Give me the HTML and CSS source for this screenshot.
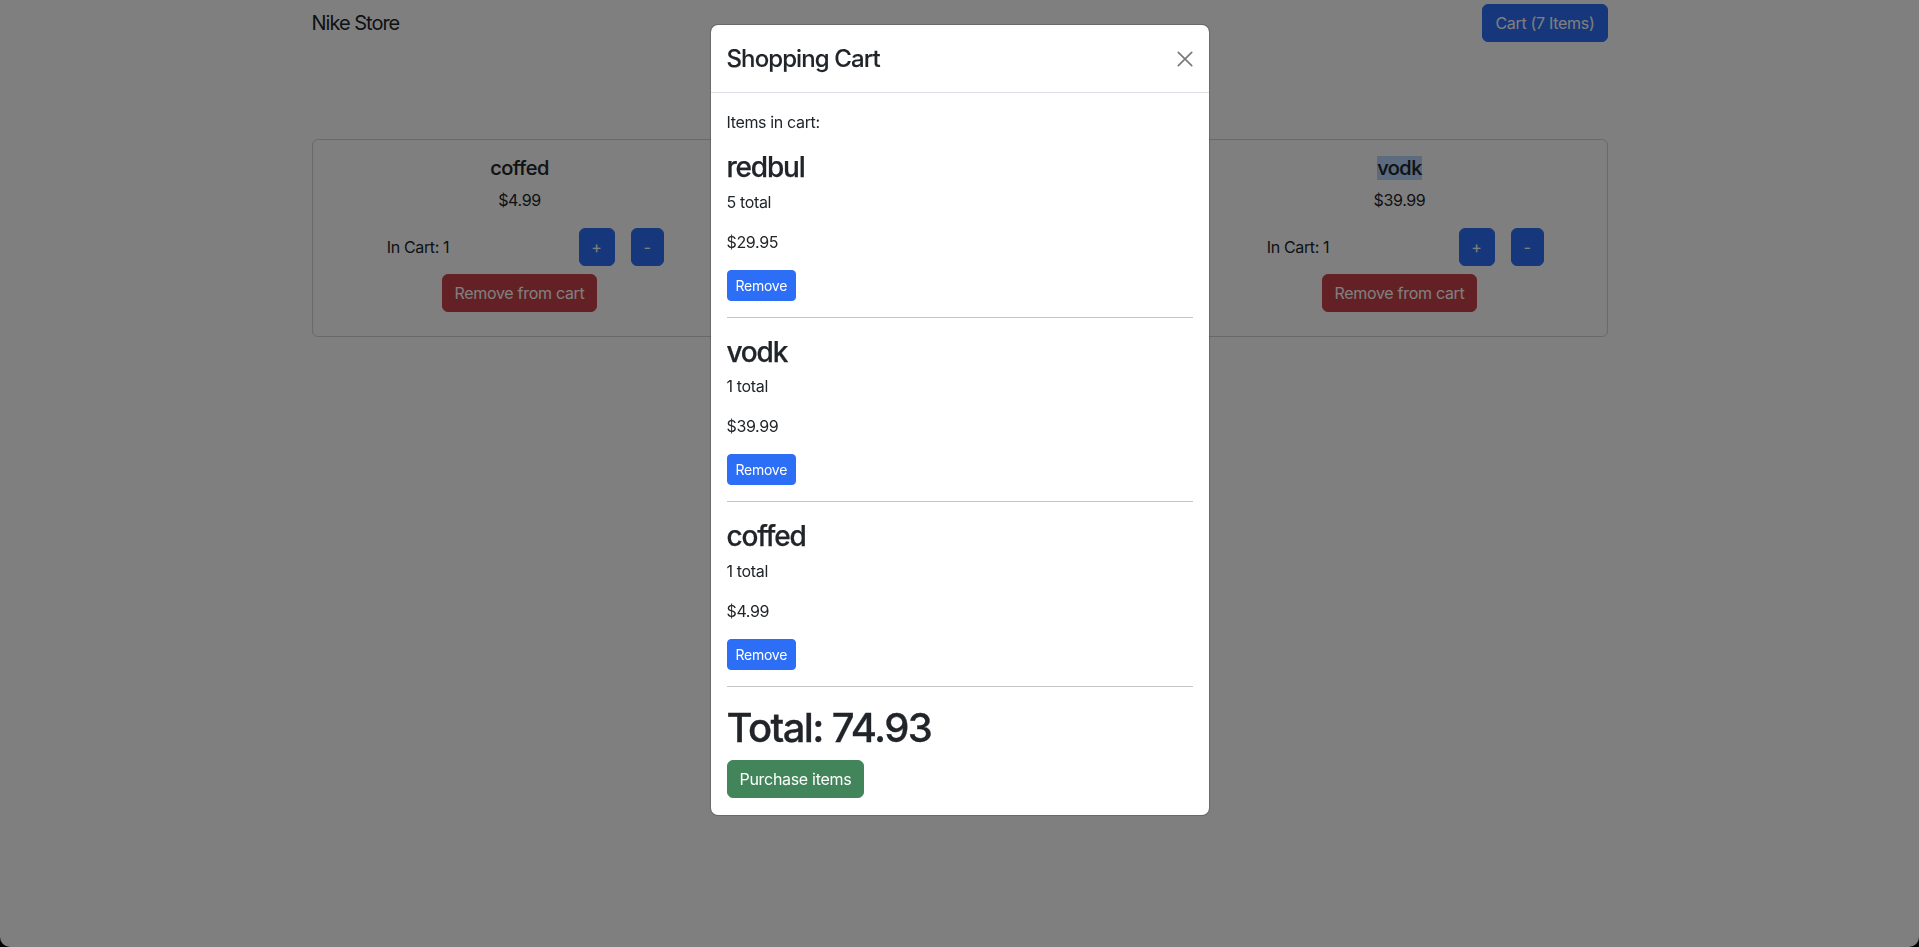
FILE: index.html
```html
<!DOCTYPE html>
<html lang="en">
<head>
<meta charset="utf-8">
<title>Nike Store</title>
<link rel="stylesheet" href="styles.css">
</head>
<body>
<div class="container">
  <header class="topbar">
    <span class="brand">Nike Store</span>
    <button class="btn btn-primary">Cart (7 Items)</button>
  </header>

  <main class="products">
    <div class="card">
      <h5 class="card-title">coffed</h5>
      <p class="price">$4.99</p>
      <div class="qty-row">
        <div class="qty-label">In Cart: 1</div>
        <div class="qty-btns">
          <button class="btn btn-primary btn-plus">+</button>
          <button class="btn btn-primary btn-minus">-</button>
        </div>
      </div>
      <button class="btn btn-danger btn-remove">Remove from cart</button>
    </div>
    <div class="card">
      <h5 class="card-title">redbul</h5>
      <p class="price">$5.99</p>
      <div class="qty-row">
        <div class="qty-label">In Cart: 5</div>
        <div class="qty-btns">
          <button class="btn btn-primary btn-plus">+</button>
          <button class="btn btn-primary btn-minus">-</button>
        </div>
      </div>
      <button class="btn btn-danger btn-remove">Remove from cart</button>
    </div>
    <div class="card">
      <h5 class="card-title"><span class="selected">vodk</span></h5>
      <p class="price">$39.99</p>
      <div class="qty-row">
        <div class="qty-label">In Cart: 1</div>
        <div class="qty-btns">
          <button class="btn btn-primary btn-plus">+</button>
          <button class="btn btn-primary btn-minus">-</button>
        </div>
      </div>
      <button class="btn btn-danger btn-remove">Remove from cart</button>
    </div>
  </main>
</div>

<div class="backdrop"></div>

<div class="modal">
  <div class="modal-dialog">
    <div class="modal-content">
      <div class="modal-header">
        <h4 class="modal-title">Shopping Cart</h4>
        <button class="btn-close" aria-label="Close">
          <svg width="16" height="16" viewBox="0 0 16 16"><path d="M1.3 1.3L14.7 14.7M14.7 1.3L1.3 14.7" stroke="#000" stroke-opacity="0.52" stroke-width="1.7" stroke-linecap="round" fill="none"/></svg>
        </button>
      </div>
      <div class="modal-body">
        <p class="intro">Items in cart:</p>
        <div class="cart-item">
          <h3>redbul</h3>
          <p>5 total</p>
          <p>$29.95</p>
          <button class="btn btn-primary btn-sm">Remove</button>
          <hr>
        </div>
        <div class="cart-item">
          <h3>vodk</h3>
          <p>1 total</p>
          <p>$39.99</p>
          <button class="btn btn-primary btn-sm">Remove</button>
          <hr>
        </div>
        <div class="cart-item">
          <h3>coffed</h3>
          <p>1 total</p>
          <p>$4.99</p>
          <button class="btn btn-primary btn-sm">Remove</button>
          <hr>
        </div>
        <h1 class="total">Total: 74.93</h1>
        <button class="btn btn-success">Purchase items</button>
      </div>
    </div>
  </div>
</div>

<div class="frame"></div>
</body>
</html>
```

FILE: styles.css
```css
* { box-sizing: border-box; }

html, body {
  margin: 0;
  height: 100%;
}

body {
  font-family: Inter, "Liberation Sans", Arial, sans-serif;
  font-size: 16px;
  line-height: 1.5;
  letter-spacing: -0.35px;
  color: #212529;
  background: #fff;
}

h1, h3, h4, h5 {
  font-family: Inter, "Liberation Sans", Arial, sans-serif;
  font-weight: 500;
  -webkit-text-stroke: 0.25px currentColor;
  margin: 0 0 8px;
  line-height: 1.2;
}

p { margin: 0 0 16px; }

.container {
  max-width: 1320px;
  margin: 0 auto;
  padding: 0 12px;
}

.topbar {
  display: flex;
  justify-content: space-between;
  align-items: center;
  padding-top: 4px;
}

.brand {
  font-size: 20px;
  line-height: 30px;
  letter-spacing: -1px;
}

.btn {
  display: inline-block;
  font-family: inherit;
  font-size: 16px;
  line-height: 24px;
  letter-spacing: -0.3px;
  padding: 6px 12px;
  border: 1px solid transparent;
  border-radius: 6px;
  color: #fff;
  cursor: pointer;
  text-align: center;
}

.btn-primary { background: #2d6ef6; border-color: #2d6ef6; }
.btn-danger { background: #c9434a; border-color: #c9434a; }
.btn-success { background: #43855a; border-color: #43855a; }

.btn-sm {
  font-size: 14px;
  line-height: 21px;
  letter-spacing: -0.25px;
  padding: 4px 8px;
  border-radius: 4px;
}

.products {
  display: grid;
  grid-template-columns: repeat(3, 1fr);
  gap: 24px;
  margin-top: 97px;
}

.card {
  border: 1px solid rgba(0, 0, 0, 0.175);
  border-radius: 6px;
  padding: 16px 16px 24px;
  text-align: center;
}

.card-title {
  font-size: 20px;
  line-height: 24px;
  letter-spacing: -0.5px;
  -webkit-text-stroke: 0.12px currentColor;
}

.selected { background: #bad6fc; }

.qty-row {
  display: grid;
  grid-template-columns: 1fr 1fr;
  align-items: center;
  margin: 0 -12px;
}

.qty-btns {
  display: flex;
  justify-content: center;
  gap: 16px;
}

.btn-plus { width: 36px; padding: 6px 0; }
.btn-minus { width: 33px; padding: 6px 0; }

.btn-remove { margin-top: 8px; }

.backdrop {
  position: fixed;
  inset: 0;
  background: rgba(0, 0, 0, 0.5);
}

.modal {
  position: fixed;
  inset: 0;
}

.modal-dialog {
  width: 500px;
  margin: 24px auto 0;
}

.modal-content {
  background: #fff;
  border: 1px solid rgba(0, 0, 0, 0.175);
  border-radius: 8px;
  background-clip: padding-box;
}

.modal-header {
  display: flex;
  align-items: center;
  padding: 16px;
  border-bottom: 1px solid #dee2e6;
}

.modal-title {
  font-size: 24px;
  line-height: 35px;
  letter-spacing: -0.9px;
  -webkit-text-stroke: 0.1px currentColor;
  margin: 0;
}

.btn-close {
  margin: -8px -8px -8px auto;
  padding: 8px;
  width: 32px;
  height: 32px;
  border: 0;
  background: transparent;
  display: flex;
  cursor: pointer;
}

.modal-body {
  padding: 17px 16px 17px;
}

.intro { margin-bottom: 15px; }

.cart-item h3 {
  font-size: 28px;
  letter-spacing: -1.2px;
  padding-top: 2px;
  margin-bottom: 5px;
}

hr {
  margin: 16px 0;
  border: 0;
  border-top: 1px solid rgba(33, 37, 41, 0.27);
}

.total {
  font-size: 40px;
  letter-spacing: -1.6px;
  -webkit-text-stroke: 0.3px currentColor;
  padding-top: 1px;
}

.frame {
  position: fixed;
  inset: 0;
  border-radius: 0 0 10px 10px;
  box-shadow: 0 0 0 40px #000;
  pointer-events: none;
}
```
